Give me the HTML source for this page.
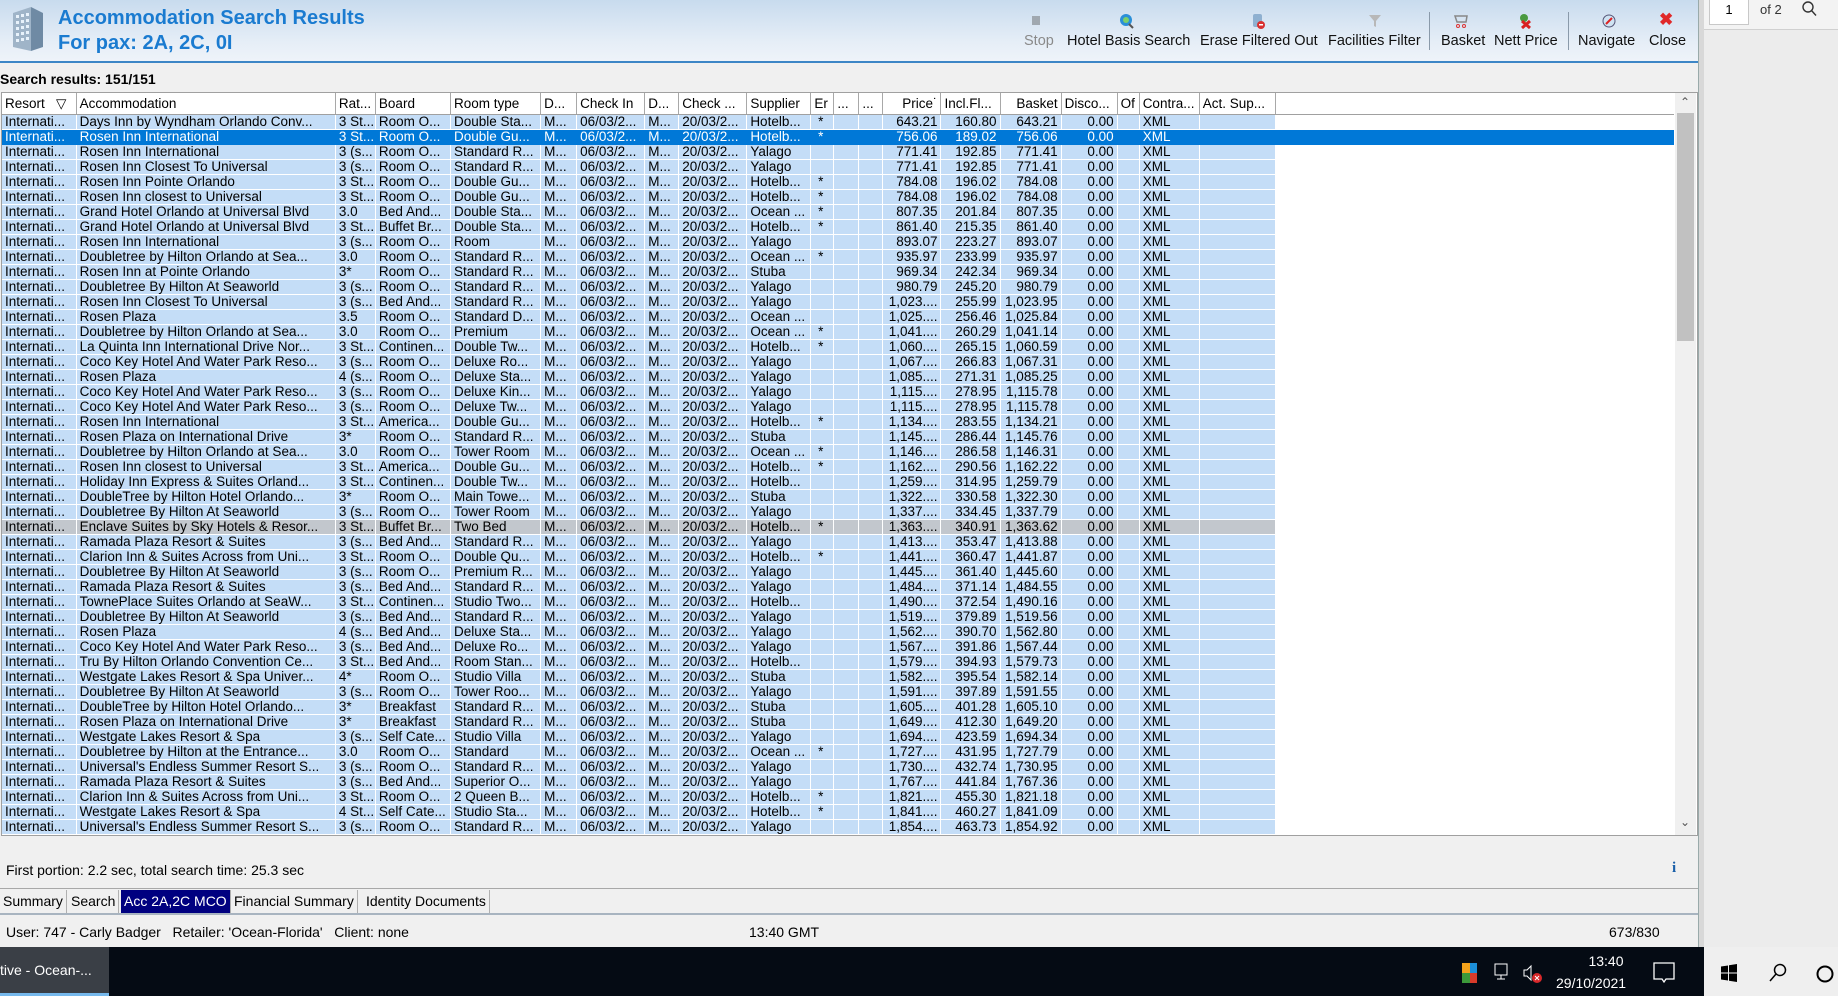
<!DOCTYPE html>
<html><head><meta charset="utf-8"><style>
*{margin:0;padding:0;box-sizing:border-box}
body{width:1838px;height:996px;overflow:hidden;background:#f0f0f0;font-family:"Liberation Sans",sans-serif;position:relative;color:#000}
.abs{position:absolute;white-space:nowrap}
#hdr{left:0;top:0;width:1698px;height:63px;background:linear-gradient(#c8dbee,#e6eef7 70%,#eef3f9);border-bottom:2px solid #3d86c6}
.t1{left:58px;top:7px;font-size:20px;font-weight:bold;color:#1a7bd0}
.t2{left:58px;top:32px;font-size:20px;font-weight:bold;color:#1a7bd0}
.tb{top:33px;font-size:14.5px;color:#111}
.ico{top:13px;width:16px;height:16px}
.sep{top:12px;width:1px;height:38px;background:#8a9aaa}
#frame{left:1px;top:92px;width:1697px;height:744px;border:1px solid #a0a0a0;background:#fff;overflow:hidden}
table{border-collapse:collapse;table-layout:fixed;width:1672px;font-size:13.5px}
td,th{white-space:nowrap;overflow:hidden;height:15px;line-height:14px;padding:0 0 0 3px;border-right:1px solid #fff;border-bottom:1px solid #fff;background:#c4ddf7;font-weight:normal;text-align:left}
th{height:20px;background:#fff;border-right:1px solid #a8a8a8;border-bottom:1px solid #a0a0a0;line-height:21px}
th.f,td.f{background:#fff;border-right:none}
td.n,th.n{text-align:right;padding:0 3px 0 0}
tr.s td{background:#0078d7;color:#fff;border-color:#0078d7}
tr.g td{background:#c2c7cd}
tr.g td.f{background:#fff}
#sb{left:1673px;top:0;width:21px;height:742px;background:#f0f0f0}
#thumb{left:1675px;top:20px;width:17px;height:228px;background:#c1c1c1}
.tab{top:890px;height:23px;font-size:14px;line-height:22px;padding:0 3px;border-right:1px solid #b0b0b0}
#task{left:0;top:947px;width:1704px;height:49px;background:#050b14}
</style></head><body>
<div id="hdr" class="abs"></div>
<svg class="abs" style="left:9px;top:5px" width="38" height="48" viewBox="0 0 38 48">
<polygon points="4,8 22,2 22,46 4,42" fill="#9fb4c8"/><polygon points="22,2 34,8 34,42 22,46" fill="#6f8aa4"/>
<g fill="#e8f2fb"><rect x="7" y="10" width="3" height="3"/><rect x="12" y="9" width="3" height="3"/><rect x="17" y="8" width="3" height="3"/><rect x="7" y="16" width="3" height="3"/><rect x="12" y="15" width="3" height="3"/><rect x="17" y="14" width="3" height="3"/><rect x="7" y="22" width="3" height="3"/><rect x="12" y="21" width="3" height="3"/><rect x="17" y="20" width="3" height="3"/><rect x="7" y="28" width="3" height="3"/><rect x="12" y="27" width="3" height="3"/><rect x="17" y="26" width="3" height="3"/><rect x="7" y="34" width="3" height="3"/><rect x="12" y="33" width="3" height="3"/><rect x="17" y="32" width="3" height="3"/></g></svg>
<div class="abs t1">Accommodation Search Results</div>
<div class="abs t2">For pax: 2A, 2C, 0I</div>
<div class="abs ico" style="left:1032px;top:16px;width:8px;height:9px;background:#a0a8b0"></div>
<div class="abs tb" style="left:1024px;color:#8a8a8a">Stop</div>
<svg class="abs ico" style="left:1118px" viewBox="0 0 16 16"><circle cx="8" cy="7" r="6" fill="#2a8fd8"/><circle cx="8" cy="7" r="3" fill="#7ccf6a"/><path d="M11 11l4 4" stroke="#555" stroke-width="2"/></svg>
<div class="abs tb" style="left:1067px">Hotel Basis Search</div>
<svg class="abs ico" style="left:1250px" viewBox="0 0 16 16"><rect x="3" y="1" width="9" height="13" rx="2" fill="#8fb0d0"/><circle cx="11" cy="12" r="4" fill="#d83030"/><rect x="9" y="11" width="4" height="1.5" fill="#fff"/></svg>
<div class="abs tb" style="left:1200px">Erase Filtered Out</div>
<svg class="abs ico" style="left:1367px" viewBox="0 0 16 16"><path d="M2 2h12l-5 6v6l-2-1v-5z" fill="#b8b8b8"/></svg>
<div class="abs tb" style="left:1328px">Facilities Filter</div>
<div class="abs sep" style="left:1429px"></div>
<svg class="abs ico" style="left:1453px" viewBox="0 0 16 16"><path d="M2 3h12l-1 6H4z" fill="none" stroke="#888" stroke-width="1.5"/><circle cx="5" cy="13" r="1.5" fill="none" stroke="#d33"/><circle cx="11" cy="13" r="1.5" fill="none" stroke="#d33"/></svg>
<div class="abs tb" style="left:1441px">Basket</div>
<svg class="abs ico" style="left:1518px" viewBox="0 0 16 16"><circle cx="6" cy="5" r="4" fill="#4a9a40"/><path d="M4 8l8 7M12 8l-8 7" stroke="#d82020" stroke-width="3"/></svg>
<div class="abs tb" style="left:1494px">Nett Price</div>
<div class="abs sep" style="left:1568px"></div>
<svg class="abs ico" style="left:1601px" viewBox="0 0 16 16"><circle cx="8" cy="8" r="6" fill="#cfe3f3" stroke="#557" stroke-width="1"/><path d="M5 11l6-6" stroke="#d22" stroke-width="2"/></svg>
<div class="abs tb" style="left:1578px">Navigate</div>
<div class="abs" style="left:1659px;top:10px;font-size:17px;font-weight:bold;color:#e02828">✖</div>
<div class="abs tb" style="left:1649px">Close</div>
<div class="abs" style="left:1698px;top:0;width:6px;height:947px;background:#d8d8d8;border-left:1px solid #9aa"></div>
<div class="abs" style="left:1704px;top:0;width:134px;height:947px;background:#ececec"></div>
<div class="abs" style="left:1704px;top:0;width:134px;height:30px;background:#f3f3f3;border-bottom:1px solid #d0d0d0"></div>
<div class="abs" style="left:1709px;top:-2px;width:40px;height:27px;background:#fff;border:1px solid #c8c8c8;font-size:13px;text-align:center;line-height:22px">1</div>
<div class="abs" style="left:1760px;top:2px;font-size:13px;color:#333">of 2</div>
<svg class="abs" style="left:1800px;top:0" width="18" height="18" viewBox="0 0 18 18"><circle cx="8" cy="7" r="5" fill="none" stroke="#333" stroke-width="1.4"/><path d="M11.5 10.5l4.5 5" stroke="#333" stroke-width="1.4"/></svg>
<div class="abs" style="left:0;top:71px;font-size:14px;font-weight:bold">Search results: 151/151</div>
<div id="frame" class="abs">
<table>
<colgroup><col style="width:74px"><col style="width:259px"><col style="width:40px"><col style="width:75px"><col style="width:90px"><col style="width:36px"><col style="width:68px"><col style="width:34px"><col style="width:68px"><col style="width:64px"><col style="width:23px"><col style="width:25px"><col style="width:24px"><col style="width:58px"><col style="width:59px"><col style="width:61px"><col style="width:56px"><col style="width:22px"><col style="width:60px"><col style="width:76px"><col style="width:398px"></colgroup>
<tr><th>Resort &nbsp;&nbsp;&#9661;<th>Accommodation<th>Rat...<th>Board<th>Room type<th>D...<th>Check In<th>D...<th>Check ...<th>Supplier<th>Er<th>...<th>...<th class=n>Price&#729;<th>Incl.Fl...<th class=n>Basket<th>Disco...<th>Of<th>Contra...<th>Act. Sup...<th class=f></tr>
<tr><td>Internati...<td>Days Inn by Wyndham Orlando Conv...<td>3 St...<td>Room O...<td>Double Sta...<td>M...<td>06/03/2...<td>M...<td>20/03/2...<td>Hotelb...<td>&nbsp;*<td><td><td class=n>643.21<td class=n>160.80<td class=n>643.21<td class=n>0.00<td><td>XML<td><td class=f></tr>
<tr class=s><td>Internati...<td>Rosen Inn International<td>3 St...<td>Room O...<td>Double Gu...<td>M...<td>06/03/2...<td>M...<td>20/03/2...<td>Hotelb...<td>&nbsp;*<td><td><td class=n>756.06<td class=n>189.02<td class=n>756.06<td class=n>0.00<td><td>XML<td><td class=f></tr>
<tr><td>Internati...<td>Rosen Inn International<td>3 (s...<td>Room O...<td>Standard R...<td>M...<td>06/03/2...<td>M...<td>20/03/2...<td>Yalago<td><td><td><td class=n>771.41<td class=n>192.85<td class=n>771.41<td class=n>0.00<td><td>XML<td><td class=f></tr>
<tr><td>Internati...<td>Rosen Inn Closest To Universal<td>3 (s...<td>Room O...<td>Standard R...<td>M...<td>06/03/2...<td>M...<td>20/03/2...<td>Yalago<td><td><td><td class=n>771.41<td class=n>192.85<td class=n>771.41<td class=n>0.00<td><td>XML<td><td class=f></tr>
<tr><td>Internati...<td>Rosen Inn Pointe Orlando<td>3 St...<td>Room O...<td>Double Gu...<td>M...<td>06/03/2...<td>M...<td>20/03/2...<td>Hotelb...<td>&nbsp;*<td><td><td class=n>784.08<td class=n>196.02<td class=n>784.08<td class=n>0.00<td><td>XML<td><td class=f></tr>
<tr><td>Internati...<td>Rosen Inn closest to Universal<td>3 St...<td>Room O...<td>Double Gu...<td>M...<td>06/03/2...<td>M...<td>20/03/2...<td>Hotelb...<td>&nbsp;*<td><td><td class=n>784.08<td class=n>196.02<td class=n>784.08<td class=n>0.00<td><td>XML<td><td class=f></tr>
<tr><td>Internati...<td>Grand Hotel Orlando at Universal Blvd<td>3.0<td>Bed And...<td>Double Sta...<td>M...<td>06/03/2...<td>M...<td>20/03/2...<td>Ocean ...<td>&nbsp;*<td><td><td class=n>807.35<td class=n>201.84<td class=n>807.35<td class=n>0.00<td><td>XML<td><td class=f></tr>
<tr><td>Internati...<td>Grand Hotel Orlando at Universal Blvd<td>3 St...<td>Buffet Br...<td>Double Sta...<td>M...<td>06/03/2...<td>M...<td>20/03/2...<td>Hotelb...<td>&nbsp;*<td><td><td class=n>861.40<td class=n>215.35<td class=n>861.40<td class=n>0.00<td><td>XML<td><td class=f></tr>
<tr><td>Internati...<td>Rosen Inn International<td>3 (s...<td>Room O...<td>Room<td>M...<td>06/03/2...<td>M...<td>20/03/2...<td>Yalago<td><td><td><td class=n>893.07<td class=n>223.27<td class=n>893.07<td class=n>0.00<td><td>XML<td><td class=f></tr>
<tr><td>Internati...<td>Doubletree by Hilton Orlando at Sea...<td>3.0<td>Room O...<td>Standard R...<td>M...<td>06/03/2...<td>M...<td>20/03/2...<td>Ocean ...<td>&nbsp;*<td><td><td class=n>935.97<td class=n>233.99<td class=n>935.97<td class=n>0.00<td><td>XML<td><td class=f></tr>
<tr><td>Internati...<td>Rosen Inn at Pointe Orlando<td>3*<td>Room O...<td>Standard R...<td>M...<td>06/03/2...<td>M...<td>20/03/2...<td>Stuba<td><td><td><td class=n>969.34<td class=n>242.34<td class=n>969.34<td class=n>0.00<td><td>XML<td><td class=f></tr>
<tr><td>Internati...<td>Doubletree By Hilton At Seaworld<td>3 (s...<td>Room O...<td>Standard R...<td>M...<td>06/03/2...<td>M...<td>20/03/2...<td>Yalago<td><td><td><td class=n>980.79<td class=n>245.20<td class=n>980.79<td class=n>0.00<td><td>XML<td><td class=f></tr>
<tr><td>Internati...<td>Rosen Inn Closest To Universal<td>3 (s...<td>Bed And...<td>Standard R...<td>M...<td>06/03/2...<td>M...<td>20/03/2...<td>Yalago<td><td><td><td class=n>1,023....<td class=n>255.99<td class=n>1,023.95<td class=n>0.00<td><td>XML<td><td class=f></tr>
<tr><td>Internati...<td>Rosen Plaza<td>3.5<td>Room O...<td>Standard D...<td>M...<td>06/03/2...<td>M...<td>20/03/2...<td>Ocean ...<td><td><td><td class=n>1,025....<td class=n>256.46<td class=n>1,025.84<td class=n>0.00<td><td>XML<td><td class=f></tr>
<tr><td>Internati...<td>Doubletree by Hilton Orlando at Sea...<td>3.0<td>Room O...<td>Premium<td>M...<td>06/03/2...<td>M...<td>20/03/2...<td>Ocean ...<td>&nbsp;*<td><td><td class=n>1,041....<td class=n>260.29<td class=n>1,041.14<td class=n>0.00<td><td>XML<td><td class=f></tr>
<tr><td>Internati...<td>La Quinta Inn International Drive Nor...<td>3 St...<td>Continen...<td>Double Tw...<td>M...<td>06/03/2...<td>M...<td>20/03/2...<td>Hotelb...<td>&nbsp;*<td><td><td class=n>1,060....<td class=n>265.15<td class=n>1,060.59<td class=n>0.00<td><td>XML<td><td class=f></tr>
<tr><td>Internati...<td>Coco Key Hotel And Water Park Reso...<td>3 (s...<td>Room O...<td>Deluxe Ro...<td>M...<td>06/03/2...<td>M...<td>20/03/2...<td>Yalago<td><td><td><td class=n>1,067....<td class=n>266.83<td class=n>1,067.31<td class=n>0.00<td><td>XML<td><td class=f></tr>
<tr><td>Internati...<td>Rosen Plaza<td>4 (s...<td>Room O...<td>Deluxe Sta...<td>M...<td>06/03/2...<td>M...<td>20/03/2...<td>Yalago<td><td><td><td class=n>1,085....<td class=n>271.31<td class=n>1,085.25<td class=n>0.00<td><td>XML<td><td class=f></tr>
<tr><td>Internati...<td>Coco Key Hotel And Water Park Reso...<td>3 (s...<td>Room O...<td>Deluxe Kin...<td>M...<td>06/03/2...<td>M...<td>20/03/2...<td>Yalago<td><td><td><td class=n>1,115....<td class=n>278.95<td class=n>1,115.78<td class=n>0.00<td><td>XML<td><td class=f></tr>
<tr><td>Internati...<td>Coco Key Hotel And Water Park Reso...<td>3 (s...<td>Room O...<td>Deluxe Tw...<td>M...<td>06/03/2...<td>M...<td>20/03/2...<td>Yalago<td><td><td><td class=n>1,115....<td class=n>278.95<td class=n>1,115.78<td class=n>0.00<td><td>XML<td><td class=f></tr>
<tr><td>Internati...<td>Rosen Inn International<td>3 St...<td>America...<td>Double Gu...<td>M...<td>06/03/2...<td>M...<td>20/03/2...<td>Hotelb...<td>&nbsp;*<td><td><td class=n>1,134....<td class=n>283.55<td class=n>1,134.21<td class=n>0.00<td><td>XML<td><td class=f></tr>
<tr><td>Internati...<td>Rosen Plaza on International Drive<td>3*<td>Room O...<td>Standard R...<td>M...<td>06/03/2...<td>M...<td>20/03/2...<td>Stuba<td><td><td><td class=n>1,145....<td class=n>286.44<td class=n>1,145.76<td class=n>0.00<td><td>XML<td><td class=f></tr>
<tr><td>Internati...<td>Doubletree by Hilton Orlando at Sea...<td>3.0<td>Room O...<td>Tower Room<td>M...<td>06/03/2...<td>M...<td>20/03/2...<td>Ocean ...<td>&nbsp;*<td><td><td class=n>1,146....<td class=n>286.58<td class=n>1,146.31<td class=n>0.00<td><td>XML<td><td class=f></tr>
<tr><td>Internati...<td>Rosen Inn closest to Universal<td>3 St...<td>America...<td>Double Gu...<td>M...<td>06/03/2...<td>M...<td>20/03/2...<td>Hotelb...<td>&nbsp;*<td><td><td class=n>1,162....<td class=n>290.56<td class=n>1,162.22<td class=n>0.00<td><td>XML<td><td class=f></tr>
<tr><td>Internati...<td>Holiday Inn Express &amp; Suites Orland...<td>3 St...<td>Continen...<td>Double Tw...<td>M...<td>06/03/2...<td>M...<td>20/03/2...<td>Hotelb...<td><td><td><td class=n>1,259....<td class=n>314.95<td class=n>1,259.79<td class=n>0.00<td><td>XML<td><td class=f></tr>
<tr><td>Internati...<td>DoubleTree by Hilton Hotel Orlando...<td>3*<td>Room O...<td>Main Towe...<td>M...<td>06/03/2...<td>M...<td>20/03/2...<td>Stuba<td><td><td><td class=n>1,322....<td class=n>330.58<td class=n>1,322.30<td class=n>0.00<td><td>XML<td><td class=f></tr>
<tr><td>Internati...<td>Doubletree By Hilton At Seaworld<td>3 (s...<td>Room O...<td>Tower Room<td>M...<td>06/03/2...<td>M...<td>20/03/2...<td>Yalago<td><td><td><td class=n>1,337....<td class=n>334.45<td class=n>1,337.79<td class=n>0.00<td><td>XML<td><td class=f></tr>
<tr class=g><td>Internati...<td>Enclave Suites by Sky Hotels &amp; Resor...<td>3 St...<td>Buffet Br...<td>Two Bed<td>M...<td>06/03/2...<td>M...<td>20/03/2...<td>Hotelb...<td>&nbsp;*<td><td><td class=n>1,363....<td class=n>340.91<td class=n>1,363.62<td class=n>0.00<td><td>XML<td><td class=f></tr>
<tr><td>Internati...<td>Ramada Plaza Resort &amp; Suites<td>3 (s...<td>Bed And...<td>Standard R...<td>M...<td>06/03/2...<td>M...<td>20/03/2...<td>Yalago<td><td><td><td class=n>1,413....<td class=n>353.47<td class=n>1,413.88<td class=n>0.00<td><td>XML<td><td class=f></tr>
<tr><td>Internati...<td>Clarion Inn &amp; Suites Across from Uni...<td>3 St...<td>Room O...<td>Double Qu...<td>M...<td>06/03/2...<td>M...<td>20/03/2...<td>Hotelb...<td>&nbsp;*<td><td><td class=n>1,441....<td class=n>360.47<td class=n>1,441.87<td class=n>0.00<td><td>XML<td><td class=f></tr>
<tr><td>Internati...<td>Doubletree By Hilton At Seaworld<td>3 (s...<td>Room O...<td>Premium R...<td>M...<td>06/03/2...<td>M...<td>20/03/2...<td>Yalago<td><td><td><td class=n>1,445....<td class=n>361.40<td class=n>1,445.60<td class=n>0.00<td><td>XML<td><td class=f></tr>
<tr><td>Internati...<td>Ramada Plaza Resort &amp; Suites<td>3 (s...<td>Bed And...<td>Standard R...<td>M...<td>06/03/2...<td>M...<td>20/03/2...<td>Yalago<td><td><td><td class=n>1,484....<td class=n>371.14<td class=n>1,484.55<td class=n>0.00<td><td>XML<td><td class=f></tr>
<tr><td>Internati...<td>TownePlace Suites Orlando at SeaW...<td>3 St...<td>Continen...<td>Studio Two...<td>M...<td>06/03/2...<td>M...<td>20/03/2...<td>Hotelb...<td><td><td><td class=n>1,490....<td class=n>372.54<td class=n>1,490.16<td class=n>0.00<td><td>XML<td><td class=f></tr>
<tr><td>Internati...<td>Doubletree By Hilton At Seaworld<td>3 (s...<td>Bed And...<td>Standard R...<td>M...<td>06/03/2...<td>M...<td>20/03/2...<td>Yalago<td><td><td><td class=n>1,519....<td class=n>379.89<td class=n>1,519.56<td class=n>0.00<td><td>XML<td><td class=f></tr>
<tr><td>Internati...<td>Rosen Plaza<td>4 (s...<td>Bed And...<td>Deluxe Sta...<td>M...<td>06/03/2...<td>M...<td>20/03/2...<td>Yalago<td><td><td><td class=n>1,562....<td class=n>390.70<td class=n>1,562.80<td class=n>0.00<td><td>XML<td><td class=f></tr>
<tr><td>Internati...<td>Coco Key Hotel And Water Park Reso...<td>3 (s...<td>Bed And...<td>Deluxe Ro...<td>M...<td>06/03/2...<td>M...<td>20/03/2...<td>Yalago<td><td><td><td class=n>1,567....<td class=n>391.86<td class=n>1,567.44<td class=n>0.00<td><td>XML<td><td class=f></tr>
<tr><td>Internati...<td>Tru By Hilton Orlando Convention Ce...<td>3 St...<td>Bed And...<td>Room Stan...<td>M...<td>06/03/2...<td>M...<td>20/03/2...<td>Hotelb...<td><td><td><td class=n>1,579....<td class=n>394.93<td class=n>1,579.73<td class=n>0.00<td><td>XML<td><td class=f></tr>
<tr><td>Internati...<td>Westgate Lakes Resort &amp; Spa Univer...<td>4*<td>Room O...<td>Studio Villa<td>M...<td>06/03/2...<td>M...<td>20/03/2...<td>Stuba<td><td><td><td class=n>1,582....<td class=n>395.54<td class=n>1,582.14<td class=n>0.00<td><td>XML<td><td class=f></tr>
<tr><td>Internati...<td>Doubletree By Hilton At Seaworld<td>3 (s...<td>Room O...<td>Tower Roo...<td>M...<td>06/03/2...<td>M...<td>20/03/2...<td>Yalago<td><td><td><td class=n>1,591....<td class=n>397.89<td class=n>1,591.55<td class=n>0.00<td><td>XML<td><td class=f></tr>
<tr><td>Internati...<td>DoubleTree by Hilton Hotel Orlando...<td>3*<td>Breakfast<td>Standard R...<td>M...<td>06/03/2...<td>M...<td>20/03/2...<td>Stuba<td><td><td><td class=n>1,605....<td class=n>401.28<td class=n>1,605.10<td class=n>0.00<td><td>XML<td><td class=f></tr>
<tr><td>Internati...<td>Rosen Plaza on International Drive<td>3*<td>Breakfast<td>Standard R...<td>M...<td>06/03/2...<td>M...<td>20/03/2...<td>Stuba<td><td><td><td class=n>1,649....<td class=n>412.30<td class=n>1,649.20<td class=n>0.00<td><td>XML<td><td class=f></tr>
<tr><td>Internati...<td>Westgate Lakes Resort &amp; Spa<td>3 (s...<td>Self Cate...<td>Studio Villa<td>M...<td>06/03/2...<td>M...<td>20/03/2...<td>Yalago<td><td><td><td class=n>1,694....<td class=n>423.59<td class=n>1,694.34<td class=n>0.00<td><td>XML<td><td class=f></tr>
<tr><td>Internati...<td>Doubletree by Hilton at the Entrance...<td>3.0<td>Room O...<td>Standard<td>M...<td>06/03/2...<td>M...<td>20/03/2...<td>Ocean ...<td>&nbsp;*<td><td><td class=n>1,727....<td class=n>431.95<td class=n>1,727.79<td class=n>0.00<td><td>XML<td><td class=f></tr>
<tr><td>Internati...<td>Universal's Endless Summer Resort S...<td>3 (s...<td>Room O...<td>Standard R...<td>M...<td>06/03/2...<td>M...<td>20/03/2...<td>Yalago<td><td><td><td class=n>1,730....<td class=n>432.74<td class=n>1,730.95<td class=n>0.00<td><td>XML<td><td class=f></tr>
<tr><td>Internati...<td>Ramada Plaza Resort &amp; Suites<td>3 (s...<td>Bed And...<td>Superior O...<td>M...<td>06/03/2...<td>M...<td>20/03/2...<td>Yalago<td><td><td><td class=n>1,767....<td class=n>441.84<td class=n>1,767.36<td class=n>0.00<td><td>XML<td><td class=f></tr>
<tr><td>Internati...<td>Clarion Inn &amp; Suites Across from Uni...<td>3 St...<td>Room O...<td>2 Queen B...<td>M...<td>06/03/2...<td>M...<td>20/03/2...<td>Hotelb...<td>&nbsp;*<td><td><td class=n>1,821....<td class=n>455.30<td class=n>1,821.18<td class=n>0.00<td><td>XML<td><td class=f></tr>
<tr><td>Internati...<td>Westgate Lakes Resort &amp; Spa<td>4 St...<td>Self Cate...<td>Studio Sta...<td>M...<td>06/03/2...<td>M...<td>20/03/2...<td>Hotelb...<td>&nbsp;*<td><td><td class=n>1,841....<td class=n>460.27<td class=n>1,841.09<td class=n>0.00<td><td>XML<td><td class=f></tr>
<tr><td>Internati...<td>Universal's Endless Summer Resort S...<td>3 (s...<td>Room O...<td>Standard R...<td>M...<td>06/03/2...<td>M...<td>20/03/2...<td>Yalago<td><td><td><td class=n>1,854....<td class=n>463.73<td class=n>1,854.92<td class=n>0.00<td><td>XML<td><td class=f></tr>
</table>
<div id="sb" class="abs"></div>
<div id="thumb" class="abs"></div>
<div class="abs" style="left:1678px;top:2px;font-size:12px;color:#555">&#8963;</div>
<div class="abs" style="left:1678px;top:722px;font-size:12px;color:#555">&#8964;</div>
</div>
<div class="abs" style="left:6px;top:862px;font-size:14px">First portion: 2.2 sec, total search time: 25.3 sec</div>
<div class="abs" style="left:1672px;top:860px;font-size:15px;font-weight:bold;color:#1a5fa8;font-family:'Liberation Serif',serif">i</div>
<div class="abs" style="left:0;top:888px;width:1698px;height:1px;background:#a8a8a8"></div>
<div class="abs tab" style="left:0">Summary</div>
<div class="abs tab" style="left:68px">Search</div>
<div class="abs tab" style="left:121px;background:#000080;color:#fff">Acc 2A,2C MCO</div>
<div class="abs tab" style="left:231px">Financial Summary</div>
<div class="abs tab" style="left:363px">Identity Documents</div>
<div class="abs" style="left:0;top:913px;width:1698px;height:2px;background:#a8b4c0"></div>
<div class="abs" style="left:6px;top:924px;font-size:14px">User: 747 - Carly Badger &nbsp; Retailer: 'Ocean-Florida' &nbsp; Client: none</div>
<div class="abs" style="left:749px;top:924px;font-size:14px">13:40 GMT</div>
<div class="abs" style="left:1609px;top:924px;font-size:14px">673/830</div>
<div id="task" class="abs"></div>
<div class="abs" style="left:0;top:947px;width:109px;height:49px;background:#3a3f46;color:#fff;font-size:14px;line-height:46px;border-bottom:3px solid #76b9ed">tive - Ocean-...</div>
<div class="abs" style="left:1462px;top:963px;width:8px;height:20px;background:linear-gradient(#f3a21b 50%,#3c9a3a 50%)"></div>
<div class="abs" style="left:1470px;top:963px;width:7px;height:20px;background:linear-gradient(#1c8fd8 50%,#d83b2a 50%)"></div>
<svg class="abs" style="left:1492px;top:962px" width="20" height="20" viewBox="0 0 20 20"><rect x="3" y="2" width="12" height="11" fill="none" stroke="#fff"/><path d="M9 13v4M5 17h8" stroke="#fff"/></svg>
<svg class="abs" style="left:1522px;top:962px" width="22" height="22" viewBox="0 0 22 22"><path d="M2 8h3l4-4v14l-4-4H2z" fill="none" stroke="#fff"/><circle cx="15" cy="16" r="5" fill="#d8282a"/><path d="M13 14l4 4M17 14l-4 4" stroke="#fff"/></svg>
<div class="abs" style="left:1576px;top:953px;font-size:14px;color:#fff;text-align:center;width:60px">13:40</div>
<div class="abs" style="left:1556px;top:975px;font-size:14px;color:#fff">29/10/2021</div>
<svg class="abs" style="left:1652px;top:961px" width="24" height="24" viewBox="0 0 24 24"><path d="M2 2h20v16H14l-2 3-2-3H2z" fill="none" stroke="#fff" stroke-width="1.3"/></svg>
<div class="abs" style="left:1704px;top:947px;width:134px;height:49px;background:#efefef"></div>
<svg class="abs" style="left:1720px;top:964px" width="18" height="18" viewBox="0 0 18 18"><path d="M1 2.5l7-1v7H1zM9 1.3l8-1.3v8.5H9zM1 9.5h7v7l-7-1zM9 9.5h8V18l-8-1.3z" fill="#000"/></svg>
<svg class="abs" style="left:1768px;top:962px" width="20" height="22" viewBox="0 0 20 22"><circle cx="12" cy="8" r="5.5" fill="none" stroke="#000" stroke-width="1.5"/><path d="M8 12l-6 7" stroke="#000" stroke-width="1.5"/></svg>
<svg class="abs" style="left:1814px;top:963px" width="22" height="22" viewBox="0 0 22 22"><circle cx="11" cy="11" r="7.5" fill="none" stroke="#000" stroke-width="2"/></svg>
</body></html>
